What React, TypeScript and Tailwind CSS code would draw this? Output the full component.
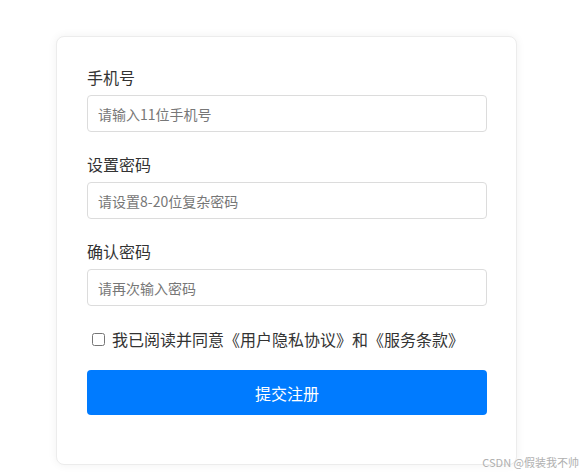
import React, { useState } from 'react';

const FIELDS = [
  { label: '手机号', placeholder: '请输入11位手机号', type: 'tel' },
  { label: '设置密码', placeholder: '请设置8-20位复杂密码', type: 'password' },
  { label: '确认密码', placeholder: '请再次输入密码', type: 'password' },
];

export default function App() {
  const [agreed, setAgreed] = useState(false);

  return (
    <div className="relative min-h-[474px] bg-white pt-[36px] pl-[56px] font-['Microsoft_YaHei','Noto_Sans_CJK_SC',sans-serif]">
      <div className="w-[461px] h-[429px] rounded-lg border border-[#ececec] bg-white shadow-[0_0_10px_rgba(0,0,0,0.06)] px-[30px] pt-[28px]">
        {FIELDS.map((f) => (
          <div key={f.label} className="mb-[20px]">
            <label className="block text-[16px] leading-[25px] text-[#333] mb-[5px]">{f.label}</label>
            <input
              type={f.type}
              placeholder={f.placeholder}
              className="block w-[400px] h-[37px] rounded border border-[#dcdcdc] px-[10px] text-[14px] text-[#333] placeholder:text-[#777] outline-none"
            />
          </div>
        ))}

        <label className="flex items-center gap-[7px] mt-[21px] pl-[5px] text-[16px] leading-[24px] text-[#333]">
          <input
            type="checkbox"
            checked={agreed}
            onChange={(e) => setAgreed(e.target.checked)}
            className="w-[13px] h-[13px] m-0"
          />
          <span>我已阅读并同意《用户隐私协议》和《服务条款》</span>
        </label>

        <button className="mt-[19px] w-[400px] h-[45px] rounded bg-[#007bff] text-white text-[16px]">
          提交注册
        </button>
      </div>

      <span className="absolute right-[4px] bottom-[4px] text-[11px] text-[#b0b0b0]">CSDN @假装我不帅</span>
    </div>
  );
}
